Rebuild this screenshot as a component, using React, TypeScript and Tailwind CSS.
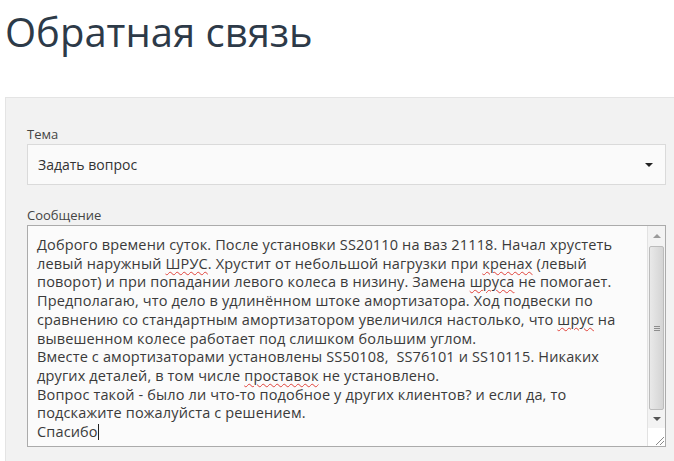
import React from "react";

const font = { fontFamily: '"Open Sans", "Noto Sans", sans-serif' };

function Typo({ children }: { children: React.ReactNode }) {
  return (
    <span className="underline decoration-wavy decoration-[#e0423a] decoration-1 underline-offset-[2px]">
      {children}
    </span>
  );
}

function Scrollbar() {
  return (
    <div className="flex flex-col w-[18px] border-l border-[#e2e2e2] bg-[#f3f3f3]">
      <div className="h-[20px] flex items-center justify-center">
        <div className="w-0 h-0 border-l-[4px] border-r-[4px] border-b-[4px] border-l-transparent border-r-transparent border-b-[#9a9a9a]" />
      </div>
      <div className="mx-[1px] flex-1 rounded-[2px] border border-[#bcbcbc] bg-gradient-to-r from-[#e9e9e9] to-[#d4d4d4] flex items-center justify-center">
        <div className="flex flex-col gap-[1px]">
          <div className="w-[6px] h-[1px] bg-[#8d8d8d]" />
          <div className="w-[6px] h-[1px] bg-[#8d8d8d]" />
          <div className="w-[6px] h-[1px] bg-[#8d8d8d]" />
        </div>
      </div>
      <div className="h-[18px] flex items-center justify-center">
        <div className="w-0 h-0 border-l-[4px] border-r-[4px] border-t-[4px] border-l-transparent border-r-transparent border-t-[#555]" />
      </div>
      <div className="h-[18px] bg-white flex items-end justify-end">
        <svg width="12" height="12" viewBox="0 0 12 12">
          <path d="M11 3 L3 11 M11 7 L7 11" stroke="#8a8a8a" strokeWidth="1" />
        </svg>
      </div>
    </div>
  );
}

export default function App() {
  return (
    <div className="w-[674px] h-[461px] overflow-hidden bg-white" style={font}>
      <h1 className="pl-[5px] pt-[5px] h-[97px] text-[40px] leading-[54px] font-normal text-[#2d3a48]">
        Обратная связь
      </h1>

      <div className="ml-[5px] border-t border-l border-[#e4e4e4] bg-[#f2f2f2] h-[400px] pl-[21px] pr-[8px] pt-[26px]">
        <div className="text-[13px] leading-[20px] text-[#444]">Тема</div>
        <div className="h-[41px] border border-[#dadada] bg-[#fafafa] flex items-center justify-between pl-[10px] pr-[12px] text-[14px] text-[#333]">
          <span>Задать вопрос</span>
          <div className="w-0 h-0 border-l-[4px] border-r-[4px] border-t-[4px] border-l-transparent border-r-transparent border-t-[#222]" />
        </div>

        <div className="mt-[20px] text-[13px] leading-[20px] text-[#444]">Сообщение</div>
        <div className="h-[222px] border border-[#ababab] bg-[#fbfbfb] flex">
          <div className="flex-1 pl-[9px] pt-[10px] text-[14.5px] leading-[18.7px] text-[#3a3a3a] whitespace-pre tracking-[0.15px]">
            <div>Доброго времени суток. После установки SS20110 на ваз 21118. Начал хрустеть</div>
            <div>левый наружный <Typo>ШРУС</Typo>. Хрустит от небольшой нагрузки при <Typo>кренах</Typo> (левый</div>
            <div>поворот) и при попадании левого колеса в низину. Замена <Typo>шруса</Typo> не помогает.</div>
            <div>Предполагаю, что дело в удлинённом штоке амортизатора. Ход подвески по</div>
            <div>сравнению со стандартным амортизатором увеличился настолько, что <Typo>шрус</Typo> на</div>
            <div>вывешенном колесе работает под слишком большим углом.</div>
            <div>Вместе с амортизаторами установлены SS50108,  SS76101 и SS10115. Никаких</div>
            <div>других деталей, в том числе <Typo>проставок</Typo> не установлено.</div>
            <div>Вопрос такой - было ли что-то подобное у других клиентов? и если да, то</div>
            <div>подскажите пожалуйста с решением.</div>
            <div className="flex items-center">
              Спасибо<span className="inline-block w-[1px] h-[16px] bg-[#222]" />
            </div>
          </div>
          <Scrollbar />
        </div>
      </div>
    </div>
  );
}
